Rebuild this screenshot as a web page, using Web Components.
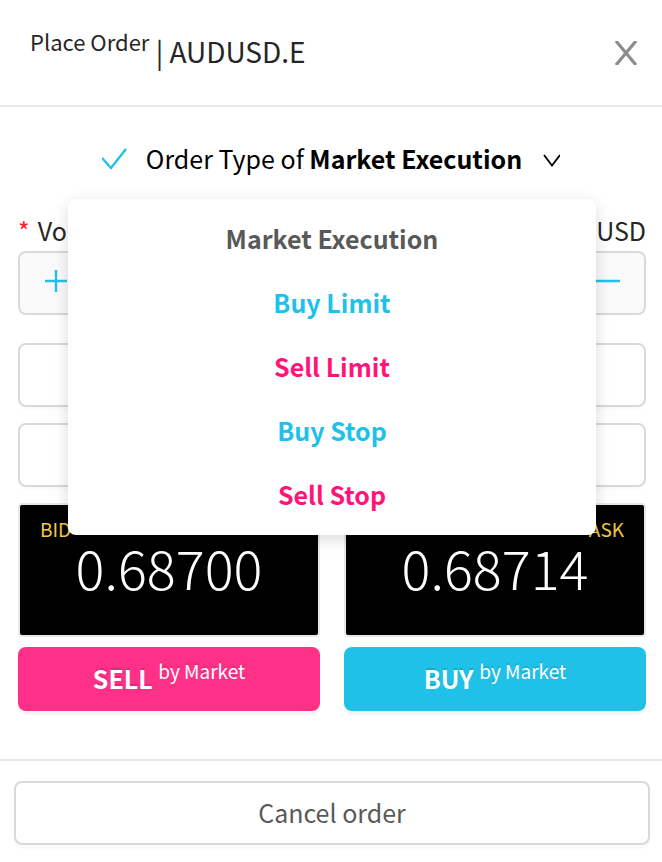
<!DOCTYPE html>
<html lang="en">
<head>
<meta charset="utf-8">
<meta name="viewport" content="width=device-width, initial-scale=1">
<title>Place Order</title>
<style>
  body {
    margin: 0;
    background: #fff;
    color: #262626;
    font-family: "Noto Sans CJK SC", "Noto Sans", sans-serif;
    font-size: 25px;
    line-height: 38px;
    --blue: #20c1e8;
    --pink: #ff1478;
    --line: #e8e8e8;
    --edge: #d9d9d9;
  }
</style>
</head>
<body>
<order-dialog>
  <order-header slot="header" symbol="AUDUSD.E">Place Order</order-header>
  <order-type-picker current="Market Execution">
    <order-type tone="plain">Market Execution</order-type>
    <order-type tone="buy">Buy Limit</order-type>
    <order-type tone="sell">Sell Limit</order-type>
    <order-type tone="buy">Buy Stop</order-type>
    <order-type tone="sell">Sell Stop</order-type>
  </order-type-picker>
  <volume-field label="Volume" unit="USD"></volume-field>
  <option-button label="Stop loss"></option-button>
  <option-button label="Take profit"></option-button>
  <quote-row>
    <quote-card side="bid" label="BID" price="0.68700"></quote-card>
    <quote-card side="ask" label="ASK" price="0.68714"></quote-card>
    <trade-button side="sell" note="by Market">SELL</trade-button>
    <trade-button side="buy" note="by Market">BUY</trade-button>
  </quote-row>
  <option-button slot="footer">Cancel order</option-button>
</order-dialog>

<script>
  // Base class: renders the subclass's markup into an open shadow root.
  class View extends HTMLElement {
    connectedCallback() {
      if (this.shadowRoot) return;
      const t = document.createElement('template');
      t.innerHTML = '<style>*{box-sizing:border-box}button,input{font:inherit;color:inherit}</style>' + this.view();
      this.attachShadow({ mode: 'open' }).append(t.content.cloneNode(true));
      this.ready();
    }
    attr(n) { return this.getAttribute(n) || ''; }
    ready() {}
  }

  customElements.define('order-dialog', class extends View {
    view() {
      return `<style>
        :host { display: block; }
        main { padding: 32px 16px 48px 18px; border-bottom: 2px solid var(--line); }
        footer { padding: 20px 12px 16px 14px; }
      </style>
      <slot name="header"></slot>
      <main><slot></slot></main>
      <footer><slot name="footer"></slot></footer>`;
    }
  });

  customElements.define('order-header', class extends View {
    view() {
      return `<style>
        :host { display: block; }
        header { display: flex; align-items: center; justify-content: space-between;
          padding: 30px 24px 29px 30px; border-bottom: 2px solid var(--line); }
        h1 { margin: 0; padding-bottom: 6px; font-size: 28px; font-weight: 400; line-height: 38px; }
        sup { font-size: 22px; line-height: 1; vertical-align: 12px; }
        button { display: grid; padding: 0; border: 0; background: none; color: #8c8c8c; cursor: pointer; }
        svg { display: block; }
      </style>
      <header>
        <h1><sup><slot></slot></sup> | ${this.attr('symbol')}</h1>
        <button type="button" aria-label="Close">
          <svg width="24" height="24" viewBox="0 0 24 24" fill="none" stroke="currentColor" stroke-width="3.200"><path d="M2 0 22 24M22 0 2 24"/></svg>
        </button>
      </header>`;
    }
  });

  customElements.define('order-type-picker', class extends View {
    view() {
      return `<style>
        :host { display: block; position: relative; }
        .trigger { display: flex; align-items: center; justify-content: center; width: 100%;
          padding: 0 2px 0 0; border: 0; background: none; color: #000; cursor: pointer; }
        .text { padding-bottom: 2px; }
        .tick { color: var(--blue); margin-right: 18px; }
        .arrow { margin-left: 20px; }
        b { font-weight: 700; }
        .menu { position: absolute; z-index: 1; top: 60px; left: 50px; right: 50px; padding: 8px 0;
          border-radius: 8px; background: #fff; box-shadow: 0 4px 16px rgba(0,0,0,.15); }
        .menu[hidden] { display: none; }
      </style>
      <button class="trigger" type="button" aria-haspopup="menu" aria-expanded="true">
        <svg class="tick" width="26" height="22" viewBox="0 0 26 22" fill="none" stroke="currentColor" stroke-width="2.4"><path d="M0 10 9 20 24 1"/></svg>
        <span class="text">Order Type of <b>${this.attr('current')}</b></span>
        <svg class="arrow" width="18" height="16" viewBox="0 0 18 16" fill="none" stroke="currentColor" stroke-width="1.800"><path d="M2 4 10 14.500 18 4"/></svg>
      </button>
      <div class="menu" role="menu"><slot></slot></div>`;
    }
    ready() {
      const trigger = this.shadowRoot.querySelector('.trigger');
      const menu = this.shadowRoot.querySelector('.menu');
      const show = on => { menu.hidden = !on; trigger.setAttribute('aria-expanded', on); };
      trigger.addEventListener('click', () => show(menu.hidden));
      this.addEventListener('choose', e => {
        this.shadowRoot.querySelector('b').textContent = e.target.textContent;
        show(false);
      });
    }
  });

  customElements.define('order-type', class extends View {
    view() {
      return `<style>
        :host { display: block; color: #595959; }
        :host([tone=buy]) { color: var(--blue); }
        :host([tone=sell]) { color: var(--pink); }
        button { display: block; width: 100%; padding: 12px 24px 14px; border: 0; background: none;
          font-weight: 700; text-align: center; cursor: pointer; }
      </style>
      <button type="button" role="menuitem"><slot></slot></button>`;
    }
    ready() {
      this.shadowRoot.querySelector('button').addEventListener('click', () =>
        this.dispatchEvent(new Event('choose', { bubbles: true })));
    }
  });

  customElements.define('volume-field', class extends View {
    view() {
      return `<style>
        :host { display: block; margin: 32px 0 28px; }
        .caption { display: flex; justify-content: space-between; padding-bottom: 2px; }
        .star { margin-right: 8px; color: #f5222d; }
        .box { display: flex; border: 2px solid var(--edge); border-radius: 8px; background: #fafafa; overflow: hidden; }
        button { display: grid; place-items: center; width: 72px; height: 60px; padding: 0 0 4px;
          border: 0; background: none; color: var(--blue); cursor: pointer; }
        input { flex: 1; min-width: 0; padding: 0; border: 0; background: #fff; text-align: center; }
      </style>
      <div class="caption">
        <label for="volume"><span class="star">*</span>${this.attr('label')}</label>
        <span>${this.attr('unit')}</span>
      </div>
      <div class="box">
        <button type="button" aria-label="Increase">
          <svg width="24" height="24" viewBox="0 0 24 24" fill="none" stroke="currentColor" stroke-width="2.400"><path d="M1 12H23M12 1V23"/></svg>
        </button>
        <input id="volume" inputmode="decimal" required>
        <button type="button" aria-label="Decrease">
          <svg width="24" height="24" viewBox="0 0 24 24" fill="none" stroke="currentColor" stroke-width="2.400"><path d="M0 12H24"/></svg>
        </button>
      </div>`;
    }
  });

  customElements.define('option-button', class extends View {
    view() {
      return `<style>
        :host { display: block; margin-bottom: 16px; }
        :host([slot=footer]) { margin: 0; }
        button { display: block; width: 100%; height: 64px; padding: 0 0 2px; border: 2px solid var(--edge); border-radius: 8px;
          background: #fff; color: #595959; box-shadow: 0 4px 0 rgba(0,0,0,.016); cursor: pointer; }
      </style>
      <button type="button"${this.attr('label') ? ` aria-label="${this.attr('label')}"` : ''}><slot></slot></button>`;
    }
  });

  customElements.define('quote-row', class extends View {
    view() {
      return `<style>
        :host { display: grid; grid-template-columns: 1fr 1fr; gap: 10px 24px; }
      </style><slot></slot>`;
    }
  });

  customElements.define('quote-card', class extends View {
    view() {
      return `<style>
        :host { display: block; height: 134px; padding: 10px 20px; border: 2px solid var(--line); border-radius: 4px;
          background: #000; box-sizing: border-box; }
        .label { color: #f0cc3c; font-size: 19px; line-height: 28px; }
        :host([side=ask]) .label { text-align: right; }
        .price { color: #fff; font-size: 54px; font-weight: 300; line-height: 48px; text-align: center; }
      </style>
      <div class="label">${this.attr('label')}</div>
      <div class="price">${this.attr('price')}</div>`;
    }
  });

  customElements.define('trade-button', class extends View {
    view() {
      return `<style>
        :host { display: block; }
        button { display: block; width: 100%; height: 64px; padding: 0 0 2px; border: 0; border-radius: 8px;
          background: var(--blue); color: #fff; box-shadow: 0 4px 0 rgba(0,0,0,.045);
          text-shadow: 0 -2px 0 rgba(0,0,0,.12); cursor: pointer; }
        :host([side=sell]) button { background: #ff3088; }
        b { font-weight: 700; }
        sup { font-size: 19px; line-height: 1; vertical-align: 10px; }
      </style>
      <button type="button"><b><slot></slot></b> <sup>${this.attr('note')}</sup></button>`;
    }
  });
</script>
</body>
</html>
